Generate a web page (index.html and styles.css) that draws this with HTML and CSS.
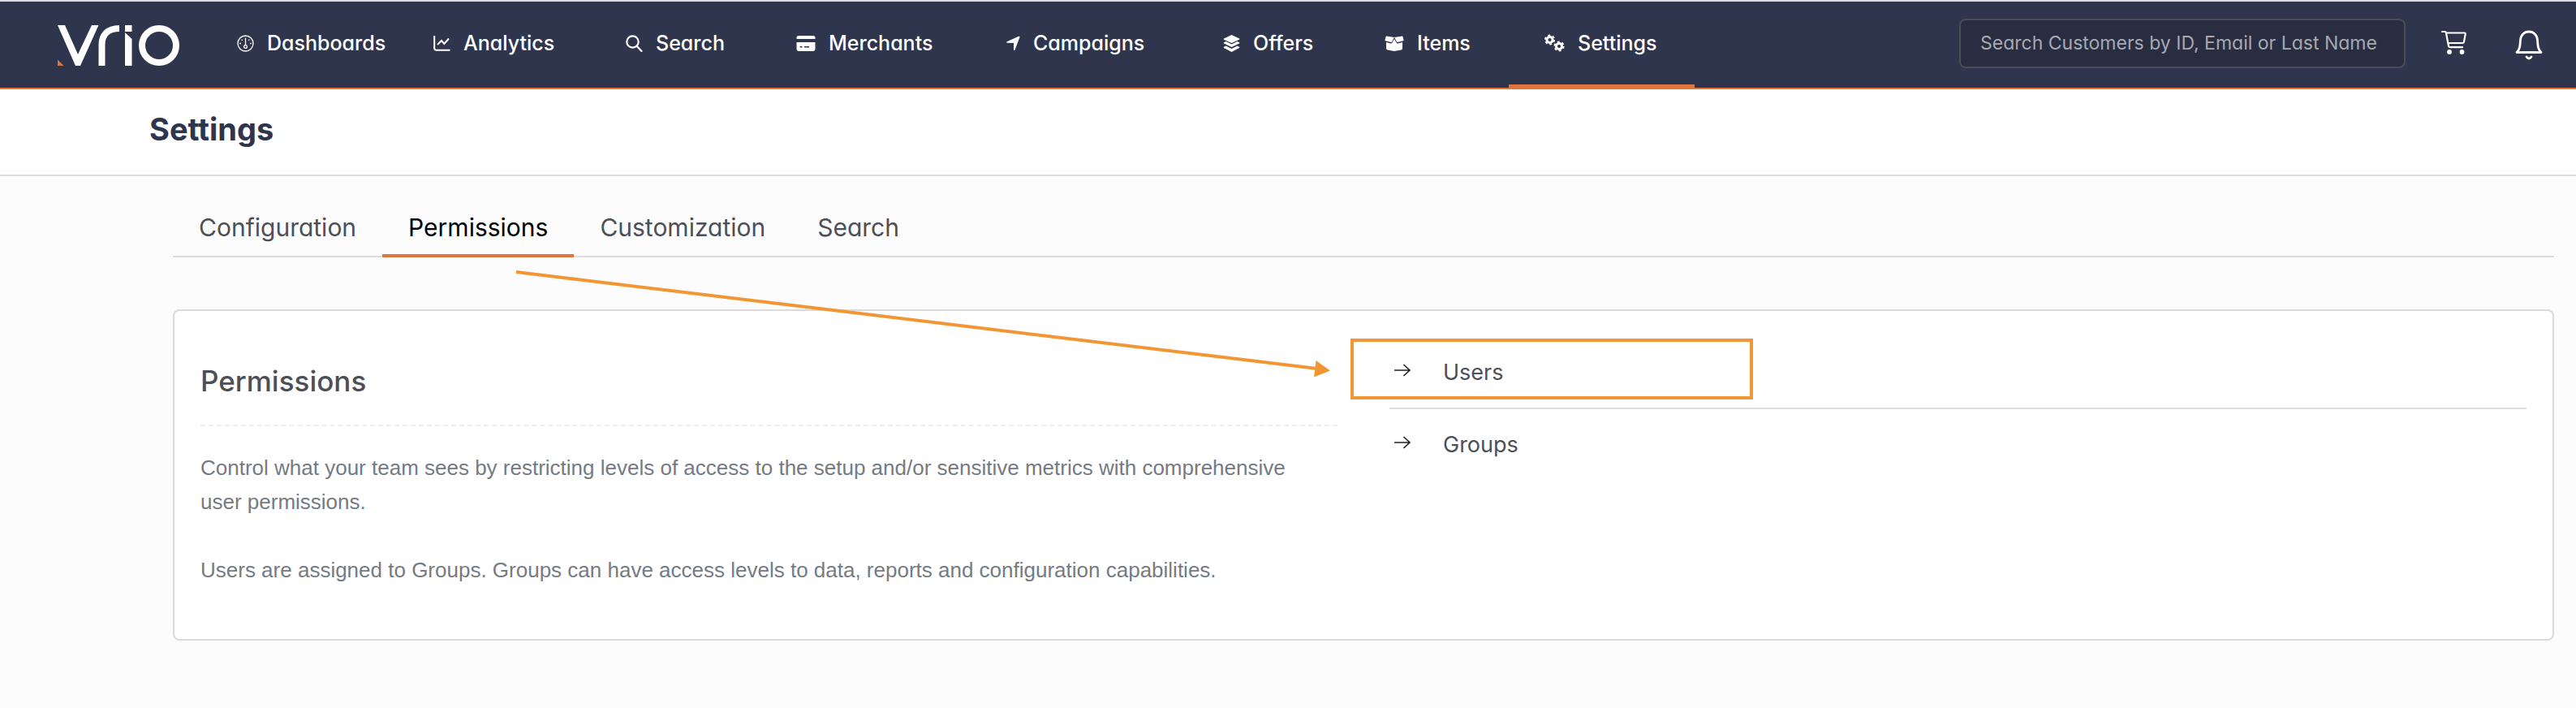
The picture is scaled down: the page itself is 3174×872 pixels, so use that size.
FILE: index.html
```html
<!DOCTYPE html>
<html lang="en">
<head>
<meta charset="utf-8">
<meta name="viewport" content="width=device-width, initial-scale=1">
<title>Settings</title>
<link rel="stylesheet" href="styles.css">
</head>
<body>
<header class="topbar">
  <a class="logo" href="#" aria-label="Vrio">
    <svg width="150" height="50" viewBox="0 0 150 50" fill="none">
      <path fill="#fff" d="M0 0h9L25 36 42 0h8.500L28 50h-6z"/>
      <path stroke="#fff" stroke-width="8" d="M54.500 50V24C54.500 12 62 4 76 4"/>
      <path fill="#fff" d="M83 0h8.500v8H83zM83 9l8.500 8v33H83z"/>
      <ellipse cx="125" cy="25" rx="21" ry="21" stroke="#fff" stroke-width="8"/>
      <path fill="#e2763a" d="M0 42.500 7.500 50H0z"/>
    </svg>
  </a>
  <nav class="nav" aria-label="Main">
    <a class="nav-item nav-item-first" href="#">
      <svg class="icon" width="21" height="21" viewBox="0 0 21 21" fill="none" stroke="#fff" stroke-width="1.300"><circle cx="10.500" cy="10.500" r="9.500"/><path d="M10.500 3.500v9"/><circle cx="10.500" cy="14.500" r="1.900"/><path d="M3.200 10.500h1.800M16 10.500h1.800M5.600 5.600l1.100 1.100M15.400 5.600l-1.100 1.100"/></svg>
      Dashboards</a>
    <a class="nav-item" href="#">
      <svg class="icon" width="21" height="21" viewBox="0 0 21 21" fill="none" stroke="#fff" stroke-width="2"><path d="M1.200 1v15.500a2.200 2.200 0 0 0 2.200 2.200H20.500M5 12l5-5 3.300 4L19 4.500"/></svg>
      Analytics</a>
    <a class="nav-item" href="#">
      <svg class="icon" width="21" height="21" viewBox="0 0 21 21" fill="none" stroke="#fff" stroke-width="2.200" stroke-linecap="round"><circle cx="8.500" cy="8.500" r="7.200"/><path d="m13.800 14 5.700 6"/></svg>
      Search</a>
    <a class="nav-item" href="#">
      <svg class="icon" width="24" height="21" viewBox="0 0 24 21" fill="#fff"><path d="M3.500 1h17A2.500 2.500 0 0 1 23.500 3.500V5H.5V3.500A2.500 2.500 0 0 1 3.500 1z"/><path fill-rule="evenodd" d="M.5 9h23v8a3 3 0 0 1-3 3h-17a3 3 0 0 1-3-3zM4.500 14v1.500h3V14zM10 14v1.500h6V14z"/></svg>
      Merchants</a>
    <a class="nav-item" href="#">
      <svg class="icon" width="17" height="21" viewBox="0 0 17 21" fill="#fff"><path d="M.8 8.200 15 1.800c1-.4 1.800.3 1.400 1.200L10.500 18.500c-.4.900-1.400.8-1.500-.2V10L1 9.700C0 9.600-.1 8.600.8 8.200z"/></svg>
      Campaigns</a>
    <a class="nav-item" href="#">
      <svg class="icon" width="21" height="21" viewBox="0 0 21 21" fill="#fff"><path d="M10.500 0 20 4.500q.8.600 0 1.200L10.500 10 1 5.700q-.8-.6 0-1.200z"/><path d="M1 9.200 3.500 8l7 3.500 7-3.500L20 9.200q.8.600 0 1.200L10.500 15 1 10.400q-.8-.6 0-1.200zM1 14.700l2.500-1.200 7 3.500 7-3.500 2.500 1.200q.8.600 0 1.200L10.500 21 1 15.900q-.8-.6 0-1.200z"/></svg>
      Offers</a>
    <a class="nav-item" href="#">
      <svg class="icon" width="24" height="21" viewBox="0 0 24 21" fill="#fff"><path d="M2.200 1.500 12 3l-3 5.500q-.4.700-1.200.5L1 7.300Q.2 7 .5 6.200l1-4q.2-.7.700-.7zM21.800 1.500 12 3l3 5.500q.4.700 1.200.5L23 7.300q.8-.3.500-1.100l-1-4q-.2-.7-.7-.7z"/><path d="m12 5 2.600 4.500q.7 1.200 2 .9L22 9v7.500q0 1.500-1.500 2L12 20l-8.500-1.500Q2 18 2 16.500V9l5.400 1.400q1.300.3 2-.9z"/></svg>
      Items</a>
    <a class="nav-item nav-item-active" href="#" aria-current="page">
      <svg class="icon" width="25" height="24" viewBox="0 0 25 24" fill="none" stroke="#fff"><circle cx="6.500" cy="8" r="3.600" stroke-width="3"/><circle cx="6.500" cy="8" r="5.600" stroke-width="2" stroke-dasharray="2.930 2.930"/><circle cx="18" cy="16" r="3.600" stroke-width="3"/><circle cx="18" cy="16" r="5.600" stroke-width="2" stroke-dasharray="2.930 2.930"/></svg>
      Settings</a>
  </nav>
  <div class="tools">
    <input class="search" type="text" aria-label="Search customers" placeholder="Search Customers by ID, Email or Last Name">
    <button class="icon-button" type="button" aria-label="Cart">
      <svg width="34" height="38" viewBox="0 0 34 38" fill="none" stroke="#fff" stroke-width="2.200" stroke-linecap="round" stroke-linejoin="round"><path d="M2 3h3.500q1 0 1.300 1L10 20.500q.4 1.700 2 1.700h15M7 4.500h22.500q1.500 0 1.200 1.500L29 15.500q-.3 1.500-1.800 1.500H9.500"/><circle cx="11" cy="28" r="1.800" fill="#fff"/><circle cx="26.500" cy="28" r="1.800" fill="#fff"/></svg>
    </button>
    <button class="icon-button" type="button" aria-label="Notifications">
      <svg width="34" height="38" viewBox="0 0 34 38" fill="none" stroke="#fff" stroke-width="2.800" stroke-linejoin="round" stroke-linecap="round"><path d="M2 28.500c4-4 4-8 4.500-15C7 7 11.500 3 17 3s10 4 10.500 10.500c.5 7 .5 11 4.500 15z"/><path d="M14 34q3 4 6 0"/></svg>
    </button>
  </div>
</header>
<div class="page-head"><h1 class="page-title">Settings</h1></div>
<main class="content">
  <nav class="tabs" aria-label="Settings sections">
    <a class="tab" href="#">Configuration</a>
    <a class="tab tab-active" href="#" aria-current="page">Permissions</a>
    <a class="tab" href="#">Customization</a>
    <a class="tab" href="#">Search</a>
  </nav>
  <section class="card">
    <div class="intro">
      <h2 class="card-title">Permissions</h2>
      <p class="text">Control what your team sees by restricting levels of access to the setup and/or sensitive metrics with comprehensive user permissions.</p>
      <p class="text">Users are assigned to Groups. Groups can have access levels to data, reports and configuration capabilities.</p>
    </div>
    <ul class="links">
      <li class="link-row">
        <a class="link" href="#"><svg class="link-arrow" width="22" height="18" viewBox="0 0 22 18" fill="none" stroke="#222" stroke-width="1.600"><path d="M1 9h19M12.500 2l7.500 7-7.500 7"/></svg>Users</a>
        <span class="highlight"></span>
      </li>
      <li class="link-row">
        <a class="link" href="#"><svg class="link-arrow" width="22" height="18" viewBox="0 0 22 18" fill="none" stroke="#222" stroke-width="1.600"><path d="M1 9h19M12.500 2l7.500 7-7.500 7"/></svg>Groups</a>
      </li>
    </ul>
  </section>
  <svg class="pointer" width="1010" height="140" viewBox="0 0 1010 140"><path d="M3 5 990 124" stroke="#f29633" stroke-width="4"/><path d="M986 134.500 988.500 114 1006 126.500z" fill="#f29633"/></svg>
</main>
</body>
</html>
```
FILE: styles.css
```css
* { box-sizing: border-box; }

body {
  margin: 0;
  background: #fcfcfc;
  color: #4d4f57;
  font-family: Inter, "Open Sans", sans-serif;
  font-feature-settings: "cv11";
}

a { color: inherit; text-decoration: none; }

.topbar {
  display: flex;
  align-items: stretch;
  height: 110px;
  padding: 0 41px 0 71px;
  background: #2e354d;
  border-top: 2px solid #ddd;
  border-bottom: 2px solid #e2763a;
}

.logo {
  display: flex;
  align-items: center;
  margin-right: 71px;
  padding-top: 2px;
}

.nav {
  display: grid;
  grid-template-columns: 198px 237px 210px 259px 267px 199px 197px 229px;
}

.nav-item {
  display: flex;
  align-items: center;
  gap: 16px;
  margin-bottom: -2px;
  padding-left: 44px;
  border-bottom: 6px solid transparent;
  color: #fff;
  font-size: 25px;
  font-weight: 500;
  white-space: nowrap;
}

.nav-item-first { padding-left: 0; }
.nav-item-active { border-bottom-color: #e2763a; }

.icon { flex: none; }

.tools {
  display: flex;
  align-items: center;
  gap: 58px;
  margin-left: auto;
  padding-bottom: 4px;
}

.search {
  width: 550px;
  height: 61px;
  margin-right: -15px;
  padding: 0 8px 0 24px;
  background: #282d42;
  border: 2px solid #4b4d55;
  border-radius: 8px;
  color: #fff;
  font: inherit;
  font-size: 23px;
}

.search::placeholder { color: #a7a9b1; opacity: 1; }

.icon-button {
  display: flex;
  padding: 4px 0 0;
  background: none;
  border: 0;
}

.page-head {
  padding: 20px 184px 27px;
  background: #fff;
  border-bottom: 2px solid #ddd;
}

.page-title {
  margin: 0;
  color: #2e354d;
  font-size: 38px;
  font-weight: 700;
  line-height: 58px;
}

.content {
  position: relative;
  padding: 32px 27px 80px 213px;
}

.tabs {
  display: flex;
  border-bottom: 2px solid #ddd;
}

.tab {
  margin-bottom: -2px;
  padding: 12px 32px 14px;
  border-bottom: 4px solid transparent;
  font-size: 30px;
  line-height: 38px;
}

.tab-active {
  border-bottom-color: #e2763a;
  color: #000;
}

.card {
  display: grid;
  grid-template-columns: 1fr 1fr;
  gap: 64px;
  margin-top: 64px;
  padding: 32px 32px 64px;
  background: #fff;
  border: 2px solid #dbdbdb;
  border-radius: 8px;
}

.card-title {
  margin: 0 0 30px;
  padding: 28px 0;
  border-bottom: 2px dashed #eee;
  font-size: 35px;
  font-weight: 500;
  line-height: 52px;
}

.text {
  margin: 0;
  padding-right: 24px;
  color: #747b84;
  font-family: "Liberation Sans", Arial, sans-serif;
  font-size: 26px;
  line-height: 42px;
}

.text + .text { margin-top: 42px; }

.links {
  margin: 0;
  padding: 0;
  list-style: none;
}

.link-row { position: relative; }
.link-row + .link-row { border-top: 2px solid #ddd; }

.link {
  display: flex;
  align-items: center;
  gap: 39px;
  height: 87px;
  padding-left: 5px;
  font-size: 27px;
}

.link-arrow { margin-bottom: 6px; }

.highlight {
  position: absolute;
  top: 2px;
  left: -48px;
  width: 496px;
  height: 75px;
  border: 4px solid #f29633;
  pointer-events: none;
}

.pointer {
  position: absolute;
  top: 113px;
  left: 633px;
  pointer-events: none;
}
```
